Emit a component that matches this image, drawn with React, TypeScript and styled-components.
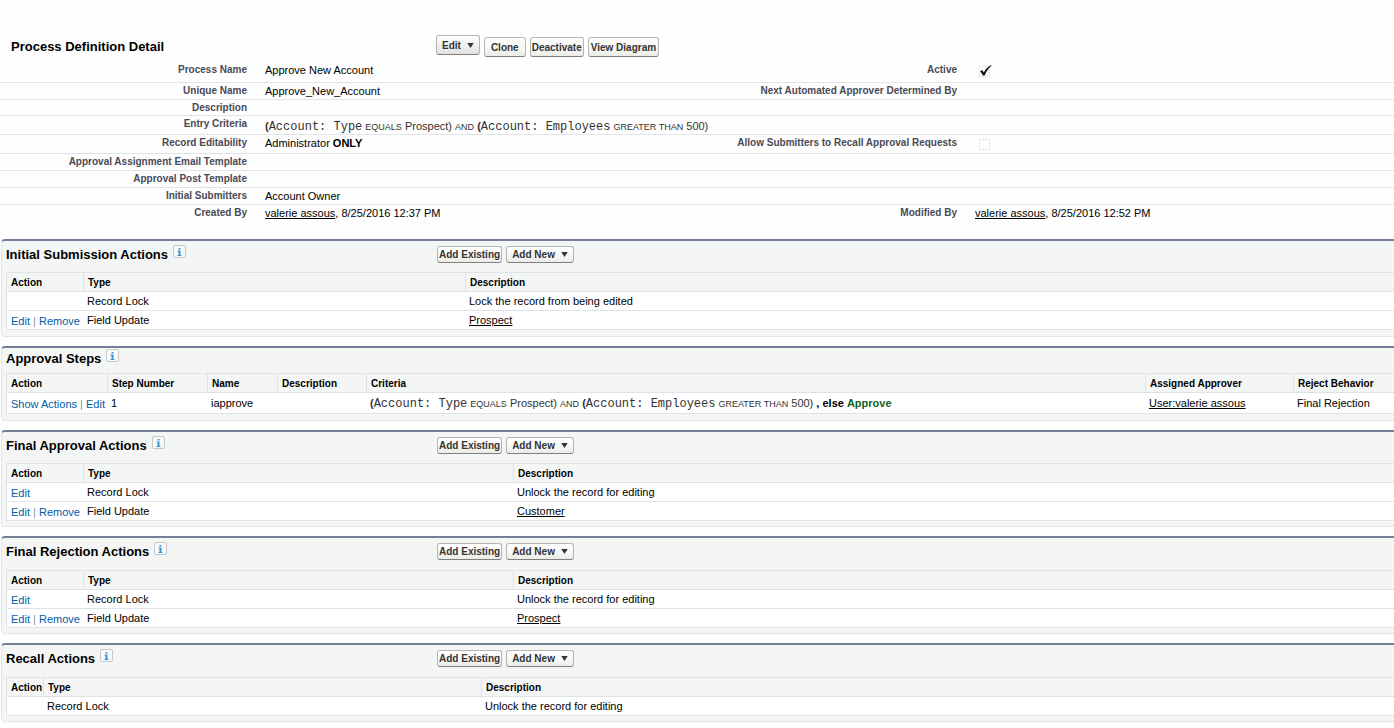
import React from "react";
import styled, { createGlobalStyle } from "styled-components";

const GlobalStyle = createGlobalStyle`
  * { box-sizing: border-box; }
  body {
    margin: 0;
    background: #fefefe;
    color: #000;
    font-family: "Liberation Sans", Arial, Helvetica, sans-serif;
    font-size: 11px;
    line-height: 13px;
  }
`;

const Page = styled.main`
  padding-top: 35px;
  overflow-x: hidden;
`;

const DetailHeader = styled.header`
  display: flex;
  align-items: flex-start;
  height: 27px;
`;

const DetailTitle = styled.h2`
  flex: 0 0 436px;
  margin: 0;
  padding: 4px 0 0 11px;
  font-size: 13px;
  line-height: 16px;
`;

const DetailButtons = styled.div`
  display: flex;
  align-items: flex-end;
  gap: 4px;
`;

const Button = styled.button<{ $tall?: boolean; $pad?: number }>`
  display: flex;
  align-items: center;
  justify-content: center;
  height: ${(p) => (p.$tall ? 20 : 17)}px;
  padding: ${(p) => (p.$tall ? 2 : 0)}px ${(p) => p.$pad ?? 1}px 0;
  border: 1px solid #b5b5b5;
  border-bottom-color: #7f7f7f;
  border-radius: 3px;
  background: linear-gradient(#ffffff, #f6f6f4 60%, #ebebe8);
  color: #333;
  font-family: inherit;
  font-size: 10px;
  font-weight: bold;
  line-height: 12px;
  white-space: nowrap;
`;

const MenuButton = styled(Button)`
  gap: 6px;
  padding: 0 5px;
`;

const RaisedMenuButton = styled(MenuButton)`
  align-self: flex-start;
  margin-bottom: 2px;
  padding-top: 1px;
  background: linear-gradient(#ffffff, #f1f1f1 50%, #e2e2e2);
`;

const Detail = styled.table`
  width: 100%;
  table-layout: fixed;
  border-collapse: separate;
  border-spacing: 0;
`;

const DetailRow = styled.tr<{ $height: number }>`
  height: ${(p) => p.$height}px;

  & > * {
    border-bottom: 1px solid #e3e4e5;
  }
  &:last-child > * {
    border-bottom: 0;
  }
`;

const DetailLabel = styled.th`
  padding: 2px 9px 0 0;
  color: #4a4a56;
  font-size: 10px;
  line-height: 12px;
  text-align: right;
  vertical-align: top;
  white-space: nowrap;
`;

const DetailValue = styled.td`
  padding: 2px 0 0 9px;
  vertical-align: top;
  white-space: nowrap;
`;

const RecordLink = styled.a`
  color: #000;
  text-decoration: underline;
`;

const CheckCell = styled.span`
  display: grid;
  width: 14px;
  height: 14px;
  margin: 1px 0 0 3px;

  & > * {
    grid-area: 1 / 1;
  }
`;

const CheckInput = styled.input`
  appearance: none;
  width: 11px;
  height: 11px;
  margin: 1px;
  border: 1px dotted #d2d2d2;
`;

const Criteria = styled.span`
  display: inline-block;
  padding-top: 2px;
  color: #333;
`;

const FieldName = styled.code`
  font-family: "Liberation Mono", "Courier New", monospace;
  font-size: 12px;
  line-height: 12px;
`;

const Operator = styled.span`
  font-size: 9px;
`;

const Approve = styled.b`
  color: #0f5f1f;
`;

const Section = styled.section<{ $bottom: number }>`
  margin: 0 0 9px 1px;
  padding: 0 0 ${(p) => p.$bottom}px 4px;
  border: 1px solid #e2e5e6;
  border-top: 2px solid #747e96;
  border-right: 0;
  border-radius: 4px 0 0 4px;
  background: #f4f6f6;
`;

const SectionHeader = styled.header<{ $height: number; $compact?: boolean }>`
  display: flex;
  align-items: flex-start;
  height: ${(p) => p.$height}px;
  padding-top: ${(p) => (p.$compact ? 1 : 4)}px;
`;

const SectionHeading = styled.div`
  display: flex;
  flex: 0 0 431px;
  gap: 5px;
`;

const SectionTitle = styled.h3`
  margin: 0;
  padding-top: 2px;
  font-size: 13px;
  line-height: 16px;
`;

const HelpLink = styled.a`
  display: flex;
  width: 13px;
  height: 13px;
  align-items: center;
  justify-content: center;
  border: 1px solid #c6c8ca;
  border-radius: 2px;
  background: #f8f9fa;
`;

const SectionButtons = styled.div`
  display: flex;
  gap: 4px;
  padding-top: 1px;
`;

const List = styled.table`
  width: 100%;
  table-layout: fixed;
  border: 1px solid #e0e3e5;
  border-right: 0;
  border-collapse: separate;
  border-spacing: 0;
  background: #fff;
`;

const HeadCell = styled.th`
  height: 19px;
  padding: 1px 0 0 4px;
  border-bottom: 1px solid #e0e3e5;
  background: #f4f6f6;
  font-size: 10px;
  line-height: 12px;
  text-align: left;
  white-space: nowrap;

  & + & {
    border-left: 1px solid #e0e3e5;
  }
`;

const Cell = styled.td<{ $tall?: boolean }>`
  height: ${(p) => (p.$tall ? 21 : 19)}px;
  padding: 0 0 0 4px;
  border-bottom: 1px solid #e0e3e5;
  white-space: nowrap;

  tr:last-child > & {
    height: ${(p) => (p.$tall ? 20 : 18)}px;
    border-bottom: 0;
  }
`;

const ActionCell = styled(Cell)`
  padding-top: 2px;
  color: #8a8f96;
`;

const ActionLink = styled.a`
  color: #015ba7;
  text-decoration: none;
`;

function Arrow() {
  return (
    <svg width="7" height="5" viewBox="0 0 7 5" aria-hidden="true">
      <path d="M0.3 0h6.4L3.5 5z" fill="#333" />
    </svg>
  );
}

function Help({ topic }: { topic: string }) {
  return (
    <HelpLink href="#" aria-label={`${topic} help`}>
      <svg width="5" height="8" viewBox="0 0 5 8" aria-hidden="true">
        <path d="M1.5 0h2v1.5h-2zM0.5 2.5h3v4.5h1v1h-4v-1h1v-3.5h-1z" fill="#3d93cf" />
      </svg>
    </HelpLink>
  );
}

function Tick({ id, checked }: { id: string; checked?: boolean }) {
  return (
    <CheckCell>
      <CheckInput id={id} type="checkbox" checked={!!checked} readOnly />
      {checked && (
        <svg width="14" height="13" viewBox="0 0 14 13" aria-hidden="true">
          <path d="M2 6.4L4.2 5L5.8 7.6C7.4 4.4 9.6 1.8 13.4 0L13.6 0.6C10.8 3 8.6 6 6.6 10.4H4.8C4.2 8.8 3.2 7.4 2 6.4z" fill="#111" />
        </svg>
      )}
    </CheckCell>
  );
}

function EntryCriteria() {
  return (
    <Criteria>
      <b>(</b>
      <FieldName>Account: Type</FieldName> <Operator>EQUALS</Operator> Prospect){" "}
      <Operator>AND</Operator> <b>(</b>
      <FieldName>Account: Employees</FieldName> <Operator>GREATER THAN</Operator> 500)
    </Criteria>
  );
}

type DetailField = {
  label: string;
  value?: React.ReactNode;
  id?: string;
};

const details: { height: number; left: DetailField; right?: DetailField }[] = [
  {
    height: 21,
    left: { label: "Process Name", value: "Approve New Account" },
    right: { label: "Active", id: "active", value: <Tick id="active" checked /> },
  },
  {
    height: 17,
    left: { label: "Unique Name", value: "Approve_New_Account" },
    right: { label: "Next Automated Approver Determined By" },
  },
  { height: 16, left: { label: "Description" } },
  { height: 19, left: { label: "Entry Criteria", value: <EntryCriteria /> } },
  {
    height: 19,
    left: { label: "Record Editability", value: <>Administrator <b>ONLY</b></> },
    right: {
      label: "Allow Submitters to Recall Approval Requests",
      id: "recall",
      value: <Tick id="recall" />,
    },
  },
  { height: 17, left: { label: "Approval Assignment Email Template" } },
  { height: 17, left: { label: "Approval Post Template" } },
  { height: 17, left: { label: "Initial Submitters", value: "Account Owner" } },
  {
    height: 34,
    left: {
      label: "Created By",
      value: <><RecordLink href="#">valerie assous</RecordLink>, 8/25/2016 12:37 PM</>,
    },
    right: {
      label: "Modified By",
      value: <><RecordLink href="#">valerie assous</RecordLink>, 8/25/2016 12:52 PM</>,
    },
  },
];

function Field({ field }: { field?: DetailField }) {
  if (!field) return <DetailValue colSpan={2} />;
  return (
    <>
      <DetailLabel scope="row">
        {field.id ? <label htmlFor={field.id}>{field.label}</label> : field.label}
      </DetailLabel>
      <DetailValue>{field.value}</DetailValue>
    </>
  );
}

type SectionData = {
  title: string;
  headHeight: number;
  bottom: number;
  compact?: boolean;
  columns: { name: string; width?: number }[];
  rows: { actions: string[]; cells: React.ReactNode[] }[];
};

const link = (text: string) => <RecordLink href="#">{text}</RecordLink>;

const sections: SectionData[] = [
  {
    title: "Initial Submission Actions",
    headHeight: 31,
    bottom: 6,
    columns: [{ name: "Action", width: 76 }, { name: "Type", width: 382 }, { name: "Description" }],
    rows: [
      { actions: [], cells: ["Record Lock", "Lock the record from being edited"] },
      { actions: ["Edit", "Remove"], cells: ["Field Update", link("Prospect")] },
    ],
  },
  {
    title: "Approval Steps",
    headHeight: 25,
    bottom: 6,
    compact: true,
    columns: [
      { name: "Action", width: 100 },
      { name: "Step Number", width: 100 },
      { name: "Name", width: 70 },
      { name: "Description", width: 89 },
      { name: "Criteria" },
      { name: "Assigned Approver", width: 148 },
      { name: "Reject Behavior", width: 101 },
    ],
    rows: [
      {
        actions: ["Show Actions", "Edit"],
        cells: [
          "1",
          "iapprove",
          "",
          <><EntryCriteria /> <b>, else <Approve>Approve</Approve></b></>,
          link("User:valerie assous"),
          "Final Rejection",
        ],
      },
    ],
  },
  {
    title: "Final Approval Actions",
    headHeight: 31,
    bottom: 5,
    columns: [{ name: "Action", width: 76 }, { name: "Type", width: 430 }, { name: "Description" }],
    rows: [
      { actions: ["Edit"], cells: ["Record Lock", "Unlock the record for editing"] },
      { actions: ["Edit", "Remove"], cells: ["Field Update", link("Customer")] },
    ],
  },
  {
    title: "Final Rejection Actions",
    headHeight: 32,
    bottom: 5,
    columns: [{ name: "Action", width: 76 }, { name: "Type", width: 430 }, { name: "Description" }],
    rows: [
      { actions: ["Edit"], cells: ["Record Lock", "Unlock the record for editing"] },
      { actions: ["Edit", "Remove"], cells: ["Field Update", link("Prospect")] },
    ],
  },
  {
    title: "Recall Actions",
    headHeight: 32,
    bottom: 5,
    columns: [{ name: "Action", width: 36 }, { name: "Type", width: 438 }, { name: "Description" }],
    rows: [{ actions: [], cells: ["Record Lock", "Unlock the record for editing"] }],
  },
];

function RelatedList({ data }: { data: SectionData }) {
  return (
    <Section $bottom={data.bottom}>
      <SectionHeader $height={data.headHeight} $compact={data.compact}>
        <SectionHeading>
          <SectionTitle>{data.title}</SectionTitle>
          <Help topic={data.title} />
        </SectionHeading>
        {!data.compact && (
          <SectionButtons>
            <Button type="button">Add Existing</Button>
            <MenuButton type="button" aria-haspopup="menu">
              Add New <Arrow />
            </MenuButton>
          </SectionButtons>
        )}
      </SectionHeader>
      <List>
        <colgroup>
          {data.columns.map((c) => (
            <col key={c.name} width={c.width} />
          ))}
        </colgroup>
        <thead>
          <tr>
            {data.columns.map((c) => (
              <HeadCell key={c.name} scope="col">{c.name}</HeadCell>
            ))}
          </tr>
        </thead>
        <tbody>
          {data.rows.map((row, r) => (
            <tr key={r}>
              <ActionCell $tall={data.compact}>
                {row.actions.map((a, i) => (
                  <React.Fragment key={a}>
                    {i > 0 && " | "}
                    <ActionLink href="#">{a}</ActionLink>
                  </React.Fragment>
                ))}
              </ActionCell>
              {row.cells.map((cell, i) => (
                <Cell key={i} $tall={data.compact}>{cell}</Cell>
              ))}
            </tr>
          ))}
        </tbody>
      </List>
    </Section>
  );
}

export default function App() {
  return (
    <Page>
      <GlobalStyle />
      <DetailHeader>
        <DetailTitle>Process Definition Detail</DetailTitle>
        <DetailButtons>
          <RaisedMenuButton type="button" aria-haspopup="menu" $tall>
            Edit <Arrow />
          </RaisedMenuButton>
          <Button type="button" $tall $pad={6}>Clone</Button>
          <Button type="button" $tall>Deactivate</Button>
          <Button type="button" $tall $pad={2}>View Diagram</Button>
        </DetailButtons>
      </DetailHeader>
      <Detail>
        <colgroup>
          <col width={256} />
          <col />
          <col width={256} />
          <col width={428} />
        </colgroup>
        <tbody>
          {details.map((d) => (
            <DetailRow key={d.left.label} $height={d.height}>
              <Field field={d.left} />
              <Field field={d.right} />
            </DetailRow>
          ))}
        </tbody>
      </Detail>
      {sections.map((s) => (
        <RelatedList key={s.title} data={s} />
      ))}
    </Page>
  );
}
